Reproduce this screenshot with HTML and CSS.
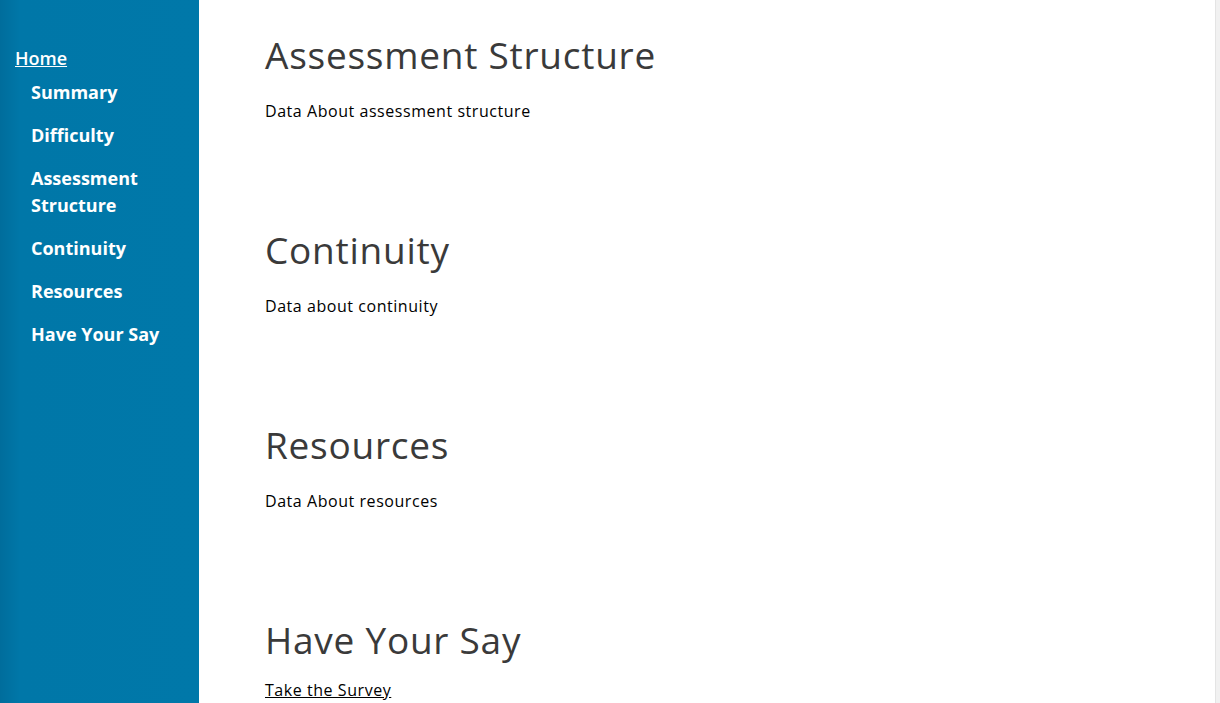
FILE: index.html
```html
<!DOCTYPE html>
<html lang="en">
<head>
<meta charset="utf-8">
<title>Assessment</title>
<link rel="stylesheet" href="styles.css">
</head>
<body>
<div class="layout">
  <nav class="sidebar">
    <a class="home" href="#">Home</a>
    <ul class="menu">
      <li><a href="#">Summary</a></li>
      <li><a href="#">Difficulty</a></li>
      <li><a href="#">Assessment Structure</a></li>
      <li><a href="#">Continuity</a></li>
      <li><a href="#">Resources</a></li>
      <li><a href="#">Have Your Say</a></li>
    </ul>
  </nav>
  <main class="content">
    <section class="block">
      <h1>Assessment Structure</h1>
      <p>Data About assessment structure</p>
    </section>
    <section class="block">
      <h1>Continuity</h1>
      <p>Data about continuity</p>
    </section>
    <section class="block">
      <h1>Resources</h1>
      <p>Data About resources</p>
    </section>
    <section class="block">
      <h1>Have Your Say</h1>
      <p><a href="#">Take the Survey</a></p>
    </section>
  </main>
  <div class="edge"></div>
</div>
</body>
</html>
```
FILE: styles.css
```css
html, body {
  margin: 0;
  padding: 0;
  height: 100%;
  overflow: hidden;
}
body {
  font-family: "Open Sans", "Noto Sans", sans-serif;
  background: #ffffff;
}
.layout {
  display: flex;
  height: 703px;
}
.sidebar {
  width: 199px;
  flex: 0 0 199px;
  background: linear-gradient(to right, #006d9c 0px, #0077a8 20px, #0078a9 100%);
  padding: 46px 0 0 15px;
  box-sizing: border-box;
}
.home {
  color: #ffffff;
  font-weight: 600;
  font-size: 18px;
  line-height: 24px;
  text-decoration: underline;
}
.menu {
  list-style: none;
  margin: 9px 0 0 0;
  padding: 0 0 0 16px;
  display: flex;
  flex-direction: column;
  gap: 16px;
}
.menu a {
  color: #ffffff;
  font-weight: 700;
  font-size: 18px;
  line-height: 27px;
  text-decoration: none;
  display: block;
  width: 130px;
}
.content {
  flex: 1;
  padding: 30px 0 0 66px;
}
.block {
  height: 195px;
}
.block h1 {
  margin: 0;
  font-size: 37px;
  line-height: 50px;
  font-weight: 400;
  letter-spacing: 0.75px;
  color: #3a3a3a;
}
.block p {
  margin: 21px 0 0 0;
  font-size: 16px;
  line-height: 20px;
  letter-spacing: 0.55px;
  color: #000000;
}
.block:last-child p {
  margin-top: 15px;
}
.block p a {
  color: #000000;
  text-decoration: underline;
}
.edge {
  width: 4px;
  flex: 0 0 4px;
  background: #f1f1f1;
  border-left: 1px solid #e4e4e4;
}
```
